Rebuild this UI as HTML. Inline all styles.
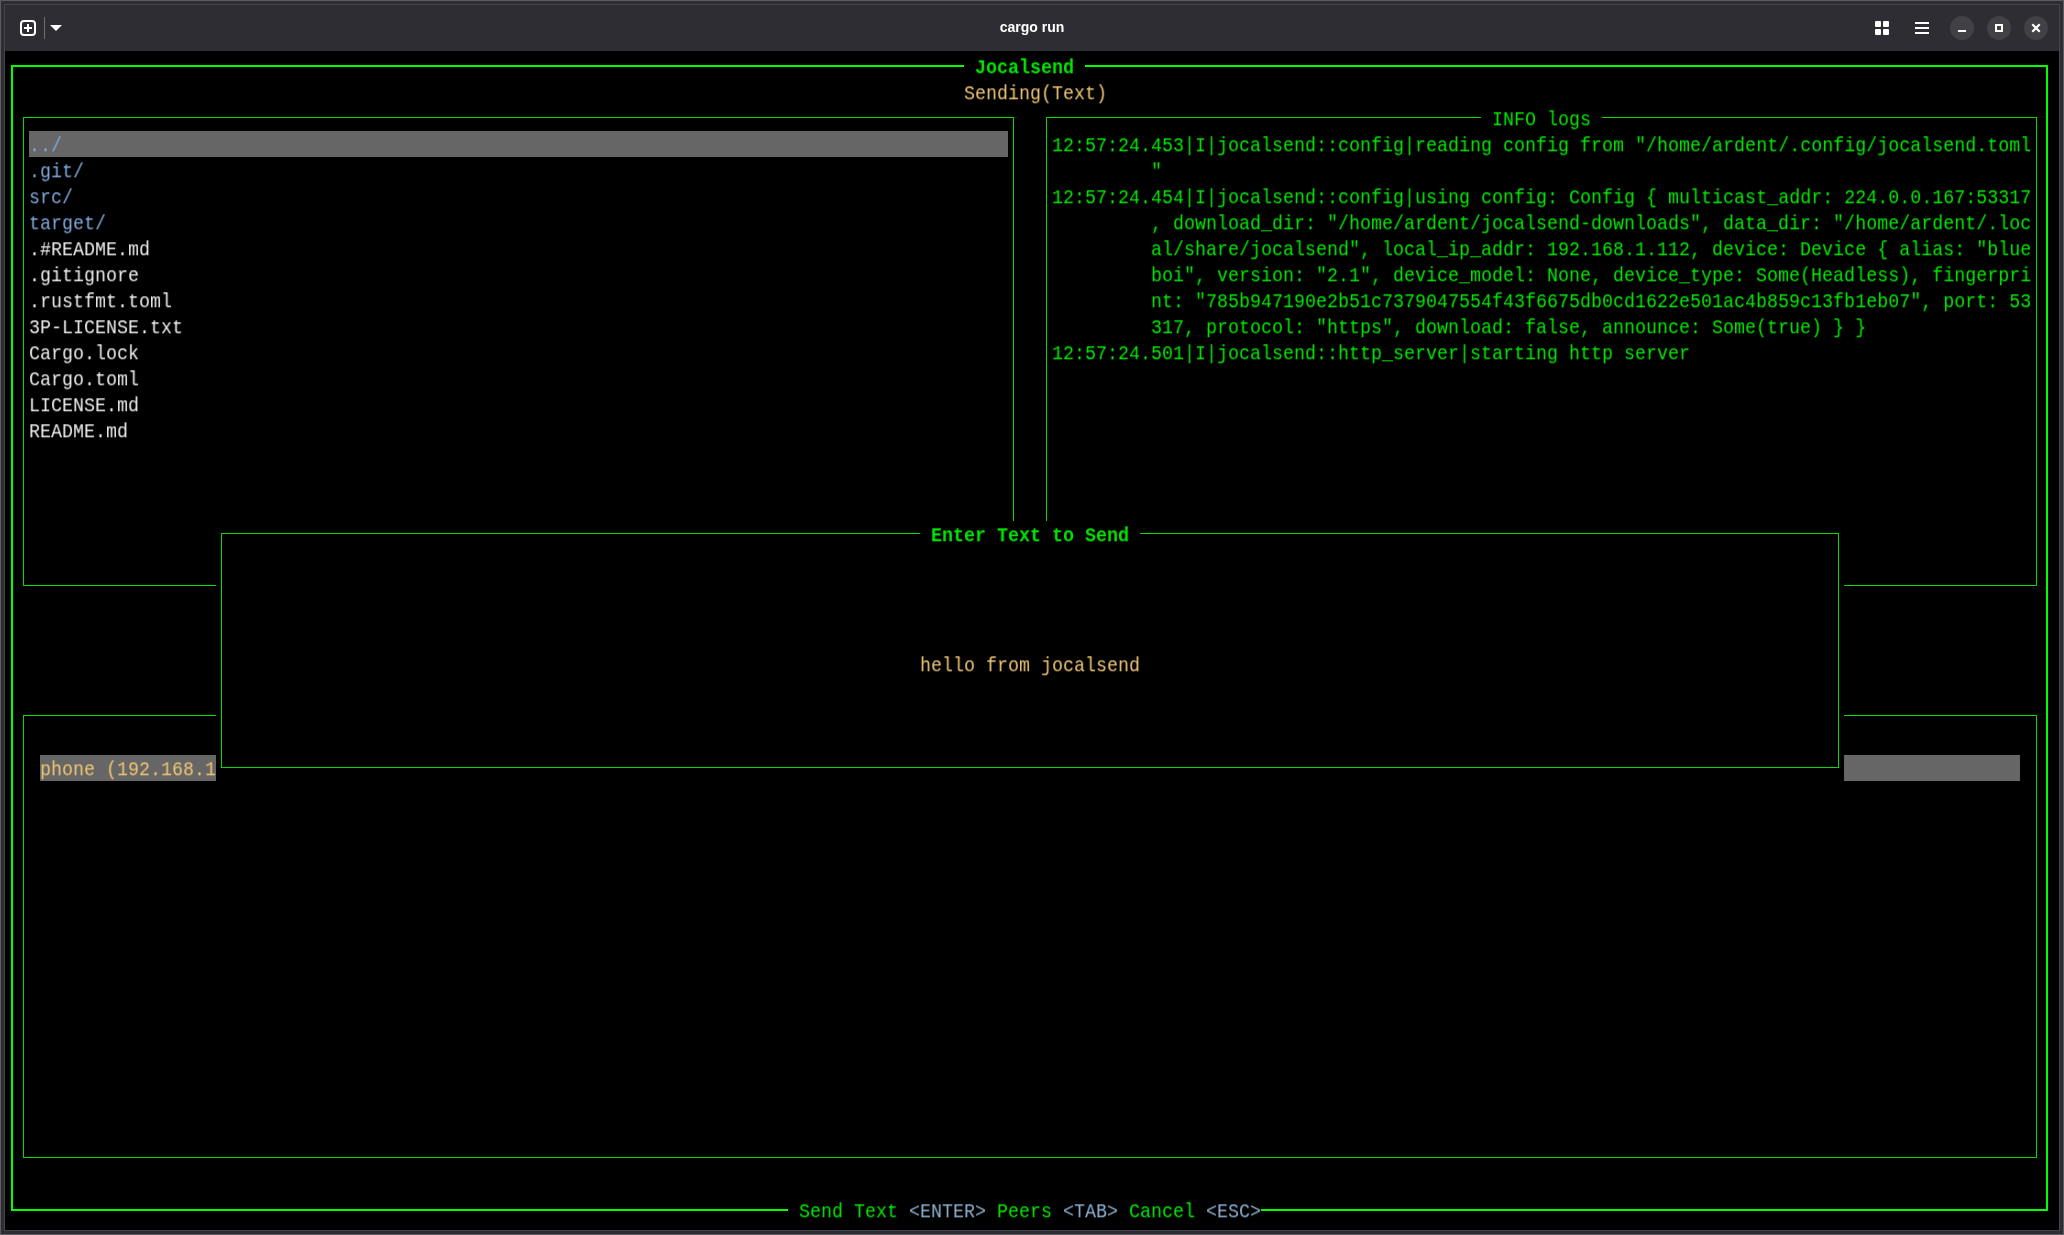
<!DOCTYPE html>
<html><head><meta charset="utf-8"><style>
html,body{margin:0;padding:0;}
body{width:2064px;height:1235px;overflow:hidden;position:relative;background:#2e2d33;}
#frame div, #term div{position:absolute;}
#term .t{white-space:pre;font-family:"Liberation Mono",monospace;font-size:20.0px;line-height:26px;height:26px;transform-origin:0 18.3px;transform:scale(0.91667,1.04);will-change:transform;}
#title{position:absolute;left:0;top:0;width:2064px;height:51px;text-align:center;font-family:"Liberation Sans",sans-serif;font-weight:bold;font-size:14px;line-height:54px;color:#fff;will-change:transform;}
</style></head><body>
<div id="frame">
<div style="left:0;top:0;width:2064px;height:1px;background:#5c5b61"></div>
<div style="left:0;top:1234px;width:2064px;height:1px;background:#5c5b61"></div>
<div style="left:0;top:0;width:1px;height:1235px;background:#5c5b61"></div>
<div style="left:2063px;top:0;width:1px;height:1235px;background:#5c5b61"></div>
<div style="left:4px;top:4px;width:2056px;height:1px;background:#46454b"></div>
<div style="left:4px;top:1230px;width:2056px;height:1px;background:#46454b"></div>
<div style="left:4px;top:4px;width:1px;height:1227px;background:#46454b"></div>
<div style="left:2059px;top:4px;width:1px;height:1227px;background:#46454b"></div>
</div>
<div id="title">cargo run</div>

<svg style="position:absolute;left:0;top:0" width="2064" height="51">
  <rect x="21" y="21" width="14" height="14" rx="3" ry="3" fill="none" stroke="#fff" stroke-width="2"/>
  <rect x="24" y="27" width="8" height="2" fill="#fff"/>
  <rect x="27" y="24" width="2" height="8" fill="#fff"/>
  <rect x="44" y="17" width="1" height="22" fill="#6e6e72"/>
  <polygon points="50,25 62,25 56,31" fill="#fff"/>
  <rect x="1875" y="21" width="6" height="6" rx="1" fill="#fff"/>
  <rect x="1883" y="21" width="6" height="6" rx="1" fill="#fff"/>
  <rect x="1875" y="29" width="6" height="6" rx="1" fill="#fff"/>
  <rect x="1883" y="29" width="6" height="6" rx="1" fill="#fff"/>
  <rect x="1915" y="22" width="14" height="2" fill="#fff"/>
  <rect x="1915" y="27" width="14" height="2" fill="#fff"/>
  <rect x="1915" y="32" width="14" height="2" fill="#fff"/>
  <circle cx="1962" cy="28" r="12" fill="#424146"/>
  <circle cx="1999" cy="28" r="12" fill="#424146"/>
  <circle cx="2036" cy="28" r="12" fill="#424146"/>
  <rect x="1958" y="30" width="8" height="2" fill="#fff"/>
  <rect x="1996" y="25" width="6" height="6" fill="none" stroke="#fff" stroke-width="2"/>
  <path d="M2032.3,24.3 L2039.7,31.7 M2039.7,24.3 L2032.3,31.7" stroke="#fff" stroke-width="2.2"/>
</svg>

<div id="term">
<div style="left:5px;top:51px;width:2054px;height:1179px;background:#000"></div>
<div style="left:11px;top:65px;width:953px;height:2px;background:#00ff00"></div>
<div style="left:1085px;top:65px;width:963px;height:2px;background:#00ff00"></div>
<div style="left:11px;top:1209px;width:777px;height:2px;background:#00ff00"></div>
<div style="left:1261px;top:1209px;width:787px;height:2px;background:#00ff00"></div>
<div style="left:11px;top:65px;width:2px;height:1146px;background:#00ff00"></div>
<div style="left:2046px;top:65px;width:2px;height:1146px;background:#00ff00"></div>
<div class="t" style="left:975px;top:55px;color:#00e600;font-weight:bold;">Jocalsend</div>
<div class="t" style="left:964px;top:81px;color:#f0c674;">Sending(Text)</div>
<div style="left:23px;top:117px;width:991px;height:1px;background:#00dc00"></div>
<div style="left:23px;top:585px;width:991px;height:1px;background:#00dc00"></div>
<div style="left:23px;top:117px;width:1px;height:469px;background:#00dc00"></div>
<div style="left:1013px;top:117px;width:1px;height:469px;background:#00dc00"></div>
<div style="left:1046px;top:117px;width:435px;height:1px;background:#00dc00"></div>
<div style="left:1602px;top:117px;width:435px;height:1px;background:#00dc00"></div>
<div style="left:1046px;top:585px;width:991px;height:1px;background:#00dc00"></div>
<div style="left:1046px;top:117px;width:1px;height:469px;background:#00dc00"></div>
<div style="left:2036px;top:117px;width:1px;height:469px;background:#00dc00"></div>
<div class="t" style="left:1492px;top:107px;color:#00ea00;">INFO logs</div>
<div style="left:29px;top:131px;width:979px;height:26px;background:#666666"></div>
<div class="t" style="left:29px;top:133px;color:#80a9dc;">../</div>
<div class="t" style="left:29px;top:159px;color:#80a9dc;">.git/</div>
<div class="t" style="left:29px;top:185px;color:#80a9dc;">src/</div>
<div class="t" style="left:29px;top:211px;color:#80a9dc;">target/</div>
<div class="t" style="left:29px;top:237px;color:#ececec;">.#README.md</div>
<div class="t" style="left:29px;top:263px;color:#ececec;">.gitignore</div>
<div class="t" style="left:29px;top:289px;color:#ececec;">.rustfmt.toml</div>
<div class="t" style="left:29px;top:315px;color:#ececec;">3P-LICENSE.txt</div>
<div class="t" style="left:29px;top:341px;color:#ececec;">Cargo.lock</div>
<div class="t" style="left:29px;top:367px;color:#ececec;">Cargo.toml</div>
<div class="t" style="left:29px;top:393px;color:#ececec;">LICENSE.md</div>
<div class="t" style="left:29px;top:419px;color:#ececec;">README.md</div>
<div class="t" style="left:1052px;top:133px;color:#00ea00;">12:57:24.453|I|jocalsend::config|reading config from &quot;/home/ardent/.config/jocalsend.toml</div>
<div class="t" style="left:1151px;top:159px;color:#00ea00;">&quot;</div>
<div class="t" style="left:1052px;top:185px;color:#00ea00;">12:57:24.454|I|jocalsend::config|using config: Config { multicast_addr: 224.0.0.167:53317</div>
<div class="t" style="left:1151px;top:211px;color:#00ea00;">, download_dir: &quot;/home/ardent/jocalsend-downloads&quot;, data_dir: &quot;/home/ardent/.loc</div>
<div class="t" style="left:1151px;top:237px;color:#00ea00;">al/share/jocalsend&quot;, local_ip_addr: 192.168.1.112, device: Device { alias: &quot;blue</div>
<div class="t" style="left:1151px;top:263px;color:#00ea00;">boi&quot;, version: &quot;2.1&quot;, device_model: None, device_type: Some(Headless), fingerpri</div>
<div class="t" style="left:1151px;top:289px;color:#00ea00;">nt: &quot;785b947190e2b51c7379047554f43f6675db0cd1622e501ac4b859c13fb1eb07&quot;, port: 53</div>
<div class="t" style="left:1151px;top:315px;color:#00ea00;">317, protocol: &quot;https&quot;, download: false, announce: Some(true) } }</div>
<div class="t" style="left:1052px;top:341px;color:#00ea00;">12:57:24.501|I|jocalsend::http_server|starting http server</div>
<div style="left:23px;top:715px;width:2014px;height:1px;background:#00dc00"></div>
<div style="left:23px;top:1157px;width:2014px;height:1px;background:#00dc00"></div>
<div style="left:23px;top:715px;width:1px;height:443px;background:#00dc00"></div>
<div style="left:2036px;top:715px;width:1px;height:443px;background:#00dc00"></div>
<div style="left:40px;top:755px;width:1980px;height:26px;background:#666666"></div>
<div class="t" style="left:40px;top:757px;color:#f0c674;">phone (192.168.1</div>
<div style="left:216px;top:521px;width:1628px;height:260px;background:#000"></div>
<div style="left:221px;top:533px;width:699px;height:1px;background:#00dc00"></div>
<div style="left:1140px;top:533px;width:699px;height:1px;background:#00dc00"></div>
<div style="left:221px;top:767px;width:1618px;height:1px;background:#00dc00"></div>
<div style="left:221px;top:533px;width:1px;height:235px;background:#00dc00"></div>
<div style="left:1838px;top:533px;width:1px;height:235px;background:#00dc00"></div>
<div class="t" style="left:931px;top:523px;color:#00e600;font-weight:bold;">Enter Text to Send</div>
<div class="t" style="left:920px;top:653px;color:#f0c674;">hello from jocalsend</div>
<div class="t" style="left:799px;top:1199px;color:#00ea00;">Send Text</div>
<div class="t" style="left:909px;top:1199px;color:#8eb1d2;">&lt;ENTER&gt;</div>
<div class="t" style="left:997px;top:1199px;color:#00ea00;">Peers</div>
<div class="t" style="left:1063px;top:1199px;color:#8eb1d2;">&lt;TAB&gt;</div>
<div class="t" style="left:1129px;top:1199px;color:#00ea00;">Cancel</div>
<div class="t" style="left:1206px;top:1199px;color:#8eb1d2;">&lt;ESC&gt;</div>
</div>
</body></html>
